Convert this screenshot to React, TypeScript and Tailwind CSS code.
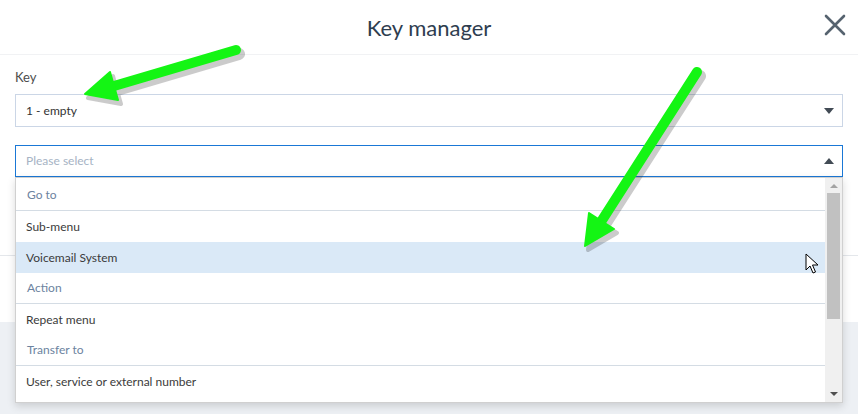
import React from "react";

type Row = { label: string; kind: "group" | "item"; active?: boolean; divider?: boolean };

const ROWS: Row[] = [
  { label: "Go to", kind: "group", divider: true },
  { label: "Sub-menu", kind: "item" },
  { label: "Voicemail System", kind: "item", active: true },
  { label: "Action", kind: "group", divider: true },
  { label: "Repeat menu", kind: "item" },
  { label: "Transfer to", kind: "group", divider: true },
  { label: "User, service or external number", kind: "item" },
];

function Caret({ up }: { up?: boolean }) {
  return (
    <svg width="10" height="6" viewBox="0 0 10 6" className="shrink-0">
      <path d={up ? "M0 6 L5 0 L10 6 Z" : "M0 0 L10 0 L5 6 Z"} fill="#424b55" />
    </svg>
  );
}

function GreenArrow({ from, tip, wings }: { from: [number, number]; tip: [number, number]; wings: [[number, number], [number, number]] }) {
  const head = `M${tip[0]} ${tip[1]} L${wings[0][0]} ${wings[0][1]} L${wings[1][0]} ${wings[1][1]} Z`;
  const base: [number, number] = [(wings[0][0] + wings[1][0]) / 2, (wings[0][1] + wings[1][1]) / 2];
  return (
    <g>
      <g transform="translate(3 4)" opacity="0.25">
        <line x1={from[0]} y1={from[1]} x2={base[0]} y2={base[1]} stroke="#333" strokeWidth="12" strokeLinecap="round" />
        <path d={head} fill="#333" stroke="#333" strokeWidth="4" strokeLinejoin="round" />
      </g>
      <line x1={from[0]} y1={from[1]} x2={base[0]} y2={base[1]} stroke="#14f514" strokeWidth="10" strokeLinecap="round" />
      <path d={head} fill="#14f514" stroke="#14f514" strokeWidth="2" strokeLinejoin="round" />
    </g>
  );
}

export default function App() {
  return (
    <div
      className="relative h-[414px] w-[858px] overflow-hidden bg-[#edf0f4]"
      style={{ fontFamily: "Lato, 'Open Sans', sans-serif" }}
    >
      {/* modal */}
      <div className="bg-white">
        <div className="relative flex h-[55px] items-center justify-center border-b border-[#f1f2f4]">
          <h2 className="text-[22px] text-[#2e3d4f]">Key manager</h2>
          <button className="absolute right-[12px] top-[14px] text-[#56636f]">
            <svg width="22" height="22" viewBox="0 0 22 22">
              <path d="M2 2 L20 20 M20 2 L2 20" stroke="currentColor" strokeWidth="2.6" strokeLinecap="round" />
            </svg>
          </button>
        </div>
        <div className="px-[15px] pt-[14px]">
          <label className="block text-[13px] leading-[16px] text-[#4d4d4d]">Key</label>
          <div className="mt-[9px] flex h-[33px] items-center justify-between border border-[#cbd6e6] pl-[10px] pr-[8px]">
            <span className="text-[12px] text-[#333]">1 - empty</span>
            <Caret />
          </div>
          <div className="mt-[18px] flex h-[32px] items-center justify-between border border-[#1a78d6] pl-[10px] pr-[8px]">
            <span className="text-[12px] text-[#a6b3c4]">Please select</span>
            <Caret up />
          </div>
        </div>
        <div className="mt-[78px] h-[67px] border-t border-[#e4e7eb]" />
      </div>

      {/* dropdown */}
      <div className="absolute left-[15px] top-[177px] flex h-[226px] w-[828px] border border-[#d0d0d0] bg-white shadow-[0_3px_8px_rgba(0,0,0,0.15)]">
        <div className="flex-1 pt-[2px]">
          {ROWS.map((r) => (
            <div
              key={r.label}
              className={`flex h-[31px] items-center pl-[10px] text-[12px] ${
                r.kind === "group" ? "pl-[11px] text-[#6c83a0]" : "text-[#3b3b3b]"
              } ${r.active ? "bg-[#dae9f7]" : ""} ${r.divider ? "border-b border-[#d4dce4]" : ""}`}
            >
              {r.label}
            </div>
          ))}
        </div>
        <div className="flex w-[17px] flex-col items-center bg-[#f0f0f0]">
          <div className="flex h-[15px] items-center justify-center">
            <svg width="8" height="4" viewBox="0 0 8 4">
              <path d="M0 4 L4 0 L8 4 Z" fill="#a3a3a3" />
            </svg>
          </div>
          <div className="h-[126px] w-[13px] bg-[#c1c1c1]" />
          <div className="flex-1" />
          <div className="flex h-[16px] items-center justify-center">
            <svg width="8" height="4" viewBox="0 0 8 4">
              <path d="M0 0 L8 0 L4 4 Z" fill="#505050" />
            </svg>
          </div>
        </div>
      </div>

      {/* annotations */}
      <svg className="pointer-events-none absolute left-0 top-0" width="858" height="414">
        <GreenArrow from={[236, 50]} tip={[85, 94]} wings={[[110, 72], [118, 100]]} />
        <GreenArrow from={[697, 72]} tip={[585, 246]} wings={[[589, 213], [614, 229]]} />
        <path
          d="M806 254 L806 270 L810 266 L813 273 L815.5 272 L812.5 265 L818 265 Z"
          fill="#fff"
          stroke="#000"
          strokeWidth="1"
          strokeLinejoin="round"
        />
      </svg>
    </div>
  );
}
